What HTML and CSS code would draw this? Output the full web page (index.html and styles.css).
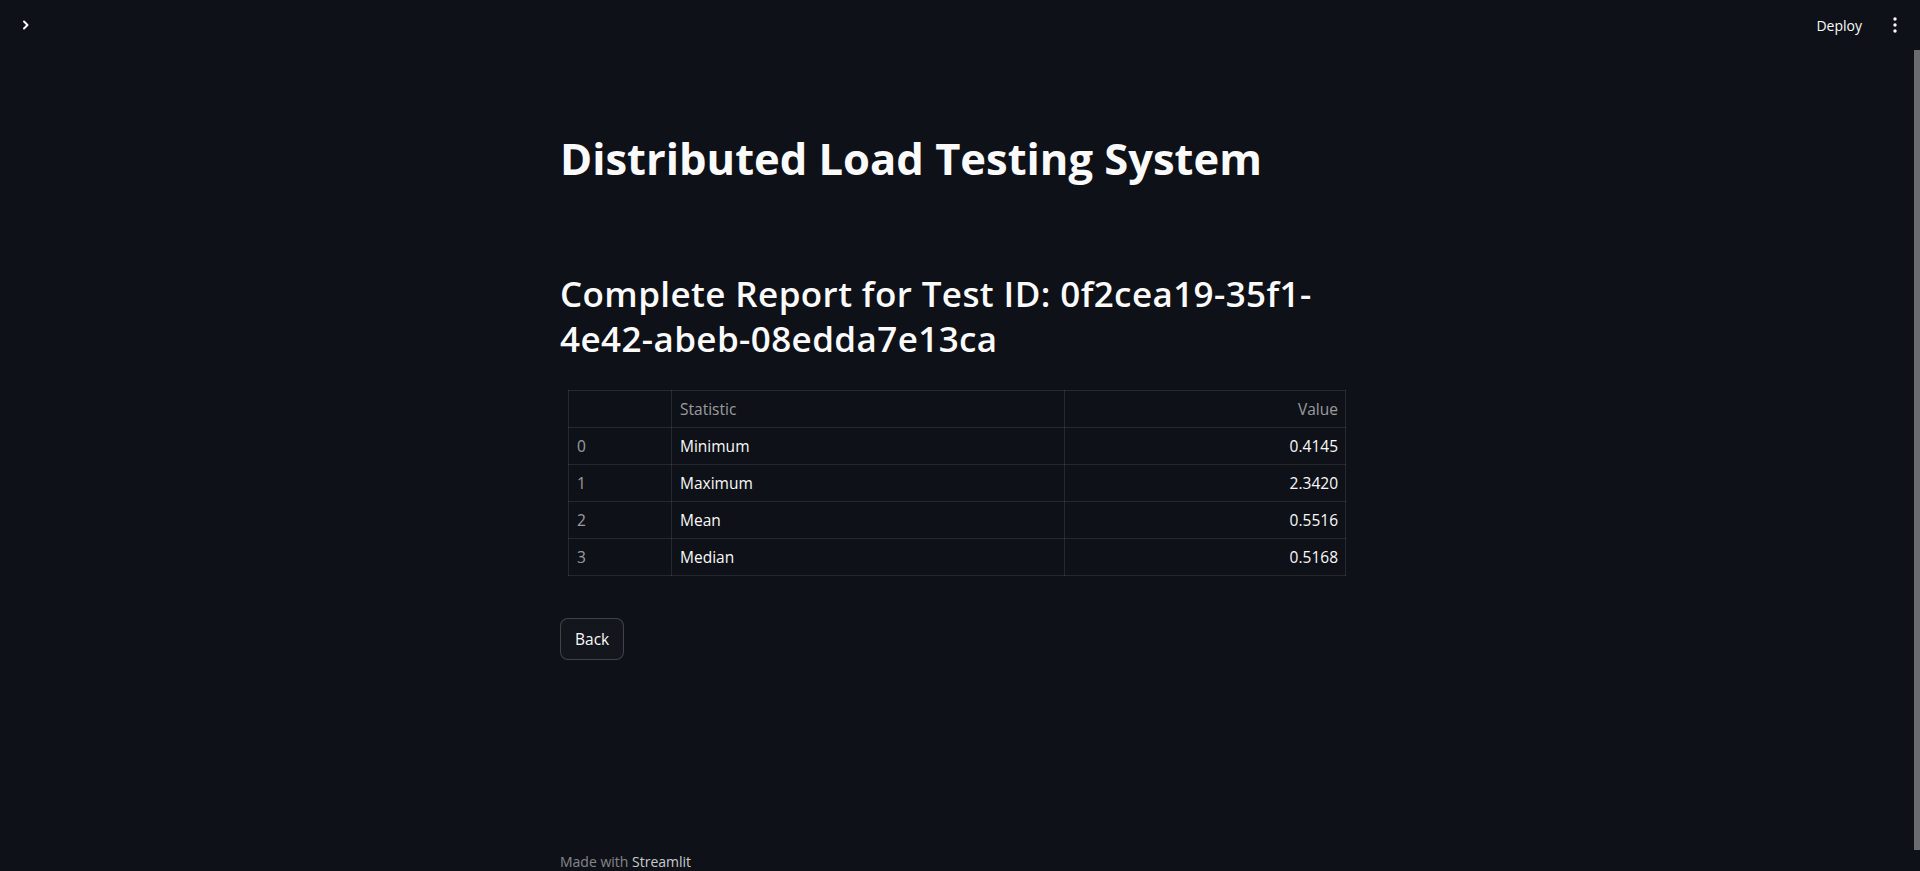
FILE: index.html
```html
<!DOCTYPE html>
<html lang="en">
<head>
<meta charset="utf-8">
<title>Distributed Load Testing System</title>
<link rel="stylesheet" href="styles.css">
</head>
<body>
<div class="app">
  <header class="topbar">
    <button class="sidebar-toggle" aria-label="Open sidebar">
      <svg width="16" height="16" viewBox="0 0 16 16"><path d="M6 4.5 L9.5 8 L6 11.5" fill="none" stroke="#fafafa" stroke-width="2" stroke-linecap="round" stroke-linejoin="round"/></svg>
    </button>
    <div class="topbar-actions">
      <span class="deploy">Deploy</span>
      <span class="menu" aria-label="Main menu">
        <svg width="6" height="18" viewBox="0 0 6 18"><circle cx="3" cy="3" r="1.7" fill="#fafafa"/><circle cx="3" cy="9" r="1.7" fill="#fafafa"/><circle cx="3" cy="15" r="1.7" fill="#fafafa"/></svg>
      </span>
    </div>
  </header>
  <main class="main">
    <div class="block">
      <h1 class="title">Distributed Load Testing System</h1>
      <h2 class="subtitle">Complete Report for Test ID: 0f2cea19-35f1-4e42-abeb-08edda7e13ca</h2>
      <table class="stats">
        <thead>
          <tr><th class="idx"></th><th class="col-stat">Statistic</th><th class="col-val num">Value</th></tr>
        </thead>
        <tbody>
          <tr><td class="idx">0</td><td>Minimum</td><td class="num">0.4145</td></tr>
          <tr><td class="idx">1</td><td>Maximum</td><td class="num">2.3420</td></tr>
          <tr><td class="idx">2</td><td>Mean</td><td class="num">0.5516</td></tr>
          <tr><td class="idx">3</td><td>Median</td><td class="num">0.5168</td></tr>
        </tbody>
      </table>
      <button class="btn">Back</button>
      <footer class="footer">Made with <span class="brand">Streamlit</span></footer>
    </div>
  </main>
  <div class="scroll-thumb"></div>
</div>
</body>
</html>
```
FILE: styles.css
```css
html, body {
  margin: 0;
  padding: 0;
  height: 100%;
  overflow: hidden;
  background: #0e1117;
}
body {
  font-family: "Open Sans", "Noto Sans", sans-serif;
  color: #fafafa;
}
.app {
  position: relative;
  height: 100%;
}
.topbar {
  height: 60px;
  display: flex;
  align-items: center;
  justify-content: space-between;
  padding: 0 22px 0 18px;
  box-sizing: border-box;
}
.sidebar-toggle {
  background: none;
  border: 0;
  padding: 0;
  width: 16px;
  height: 16px;
  margin-top: -10px;
  display: flex;
}
.topbar-actions {
  display: flex;
  align-items: center;
  gap: 30px;
  margin-top: -10px;
}
.deploy {
  font-size: 14px;
  color: #fafafa;
}
.menu {
  display: flex;
}
.main {
  padding-right: 14px;
}
.block {
  width: 786px;
  margin: 0 auto;
  padding-top: 72px;
}
.title {
  margin: 0;
  font-size: 43.5px;
  line-height: 53px;
  font-weight: 700;
}
.subtitle {
  margin: 86px 0 0;
  font-size: 35px;
  line-height: 45px;
  letter-spacing: 0.4px;
  font-weight: 600;
}
.stats {
  margin: 29px 0 0 8px;
  width: 778px;
  border-collapse: collapse;
  font-size: 15.5px;
  table-layout: fixed;
}
.stats th, .stats td {
  border: 1px solid rgba(250, 250, 250, 0.1);
  height: 37px;
  padding: 0 7px 0 8px;
  text-align: left;
  font-weight: 400;
  box-sizing: border-box;
}
.stats th {
  color: rgba(250, 250, 250, 0.6);
}
.stats .idx {
  width: 103px;
  color: rgba(250, 250, 250, 0.6);
}
.stats .col-stat {
  width: 393px;
}
.stats .num {
  text-align: right;
}
.btn {
  display: block;
  margin-top: 42px;
  height: 42px;
  padding: 0 14px;
  border: 1px solid rgba(250, 250, 250, 0.2);
  border-radius: 8px;
  background: #13161d;
  color: #fafafa;
  font-family: inherit;
  font-size: 15.5px;
}
.footer {
  margin-top: 192px;
  font-size: 14px;
  line-height: 20px;
  color: rgba(250, 250, 250, 0.5);
}
.brand {
  color: rgba(250, 250, 250, 0.8);
}
.scroll-thumb {
  position: absolute;
  right: 0;
  top: 50px;
  width: 6px;
  height: 800px;
  background: #6b6c70;
}
```
